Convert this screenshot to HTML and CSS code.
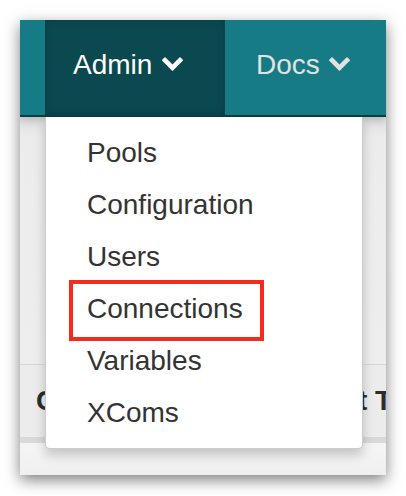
FILE: index.html
```html
<!DOCTYPE html>
<html>
<head>
<meta charset="utf-8">
<link rel="stylesheet" href="styles.css">
</head>
<body>
<div class="window">
  <nav class="navbar">
    <div class="nav-item nav-admin">
      <span>Admin</span>
      <svg class="chev" viewBox="90 533 1612 1035"><path d="M1683 808l-742 741q-19 19-45 19t-45-19l-742-741q-19-19-19-45.5t19-45.5l166-165q19-19 45-19t45 19l531 531 531-531q19-19 45-19t45 19l166 165q19 19 19 45.5t-19 45.5z" fill="currentColor"/></svg>
    </div>
    <div class="nav-item nav-docs">
      <span>Docs</span>
      <svg class="chev" viewBox="90 533 1612 1035"><path d="M1683 808l-742 741q-19 19-45 19t-45-19l-742-741q-19-19-19-45.5t19-45.5l166-165q19-19 45-19t45 19l531 531 531-531q19-19 45-19t45 19l166 165q19 19 19 45.5t-19 45.5z" fill="currentColor"/></svg>
    </div>
  </nav>
  <div class="content">
    <div class="spacer"></div>
    <div class="thead">
      <span class="th-first">Conn Id</span>
      <span class="th-second">Port Type</span>
    </div>
    <div class="band"></div>
    <div class="rest"></div>
  </div>
  <ul class="dropdown">
    <li>Pools</li>
    <li>Configuration</li>
    <li>Users</li>
    <li class="marked">Connections<span class="highlight"></span></li>
    <li>Variables</li>
    <li>XComs</li>
  </ul>
</div>
</body>
</html>
```
FILE: styles.css
```css
* { box-sizing: border-box; }
html, body { margin: 0; background: #fff; }
body {
  padding: 20px;
  font-family: "Liberation Sans", Arial, sans-serif;
}
.window {
  position: relative;
  width: 366px;
  height: 455px;
  overflow: hidden;
  background: #efefef;
  box-shadow: 0 5px 14px rgba(0, 0, 0, 0.5);
}
.navbar {
  position: relative;
  z-index: 2;
  display: flex;
  height: 97px;
  padding-left: 25px;
  background: #177b85;
  border-bottom: 2px solid #0a3f45;
  box-shadow: 0 3px 8px rgba(0, 0, 0, 0.18);
}
.nav-item {
  display: flex;
  align-items: flex-start;
  padding-top: 29px;
  font-size: 28px;
  line-height: 32px;
}
.nav-admin {
  width: 180px;
  padding-left: 28px;
  background: #0a4950;
  color: #fff;
  box-shadow: inset 0 0 8px rgba(0, 0, 0, 0.18);
}
.nav-docs {
  padding-left: 31px;
  color: #e2e2e2;
}
.chev {
  width: 21px;
  height: 14px;
  margin-left: 10px;
  margin-top: 8px;
}
.nav-docs .chev { margin-left: 9px; }
.content {
  display: flex;
  flex-direction: column;
  height: 358px;
}
.spacer {
  height: 247px;
  background: linear-gradient(#dedede 0, #ececec 20px, #eeeeee 100%);
}
.thead {
  display: flex;
  height: 73px;
  border-top: 1px solid #d6d6d6;
  background: #ececec;
  padding-left: 16px;
  font-weight: bold;
  font-size: 28px;
  line-height: 72px;
  color: #2b2b2b;
  white-space: nowrap;
}
.thead span { flex-shrink: 0; }
.th-second { margin-left: 171px; }
.band {
  height: 6px;
  background: #d9d9d9;
}
.rest {
  flex: 1;
  background: linear-gradient(#f5f5f5, #efefef);
}
.dropdown {
  position: absolute;
  z-index: 3;
  top: 97px;
  left: 25px;
  width: 318px;
  height: 332px;
  margin: 0;
  padding: 10px 0 9px;
  list-style: none;
  background: #fff;
  border: 1px solid rgba(0, 0, 0, 0.2);
  border-top: none;
  border-radius: 0 0 5px 5px;
  box-shadow: 0 6px 12px rgba(0, 0, 0, 0.2);
}
.dropdown li {
  position: relative;
  height: 52px;
  padding-left: 41px;
  font-size: 28px;
  line-height: 52px;
  color: #333;
}
.highlight {
  position: absolute;
  left: 23px;
  top: -3px;
  width: 195px;
  height: 61px;
  border: 4px solid #f72b1d;
}
```
